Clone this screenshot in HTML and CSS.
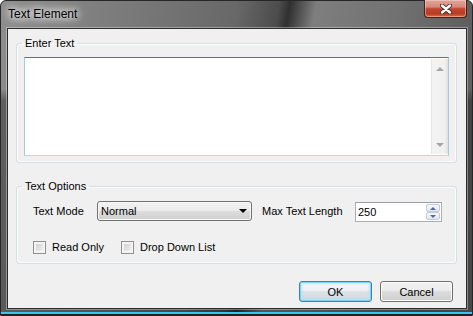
FILE: index.html
```html
<!DOCTYPE html>
<html lang="en">
<head>
  <meta charset="UTF-8" />
  <title>Text Element</title>
  <link rel="stylesheet" href="styles.css">
</head>
<body>
  <div class="window">
    <div class="titlebar">
      <span class="title">Text Element</span>
      <button class="close" aria-label="Close">
        <svg width="12" height="10" viewBox="0 0 12 10">
          <path d="M2 1.5 L10 8.5 M10 1.5 L2 8.5" stroke="#3a2a28" stroke-width="4.2" stroke-linecap="round"/>
          <path d="M2 1.5 L10 8.5 M10 1.5 L2 8.5" stroke="#fff" stroke-width="2.4" stroke-linecap="round"/>
        </svg>
      </button>
    </div>

    <div class="client">
      <fieldset class="group group-text">
        <legend>Enter Text</legend>
        <div class="textbox">
          <div class="textbox-area"></div>
          <div class="vscroll">
            <span class="arrow arrow-up"></span>
            <span class="arrow arrow-down"></span>
          </div>
        </div>
      </fieldset>

      <fieldset class="group group-options">
        <legend>Text Options</legend>
        <div class="row">
          <label class="field-label mode-label">Text Mode</label>
          <div class="combo">
            <span>Normal</span>
            <span class="combo-arrow"></span>
          </div>
          <label class="field-label len-label">Max Text Length</label>
          <div class="spin">
            <span class="spin-value">250</span>
            <div class="spin-buttons">
              <span class="spin-btn"><span class="tri tri-up"></span></span>
              <span class="spin-btn"><span class="tri tri-down"></span></span>
            </div>
          </div>
        </div>
        <div class="row checks">
          <label class="check"><span class="box"></span>Read Only</label>
          <label class="check"><span class="box"></span>Drop Down List</label>
        </div>
      </fieldset>

      <div class="buttons">
        <button class="btn btn-default">OK</button>
        <button class="btn">Cancel</button>
      </div>
    </div>
  </div>
</body>
</html>
```

FILE: styles.css
```css
* {
  box-sizing: border-box;
}

body {
  margin: 0;
  font-family: 'Liberation Sans', Arial, sans-serif;
  font-size: 11px;
  color: #000;
  background: #fff;
}

/* window frame */
.window {
  width: 473px;
  height: 316px;
  display: flex;
  flex-direction: column;
  padding: 0 5px 6px 6px;
  border: 1px solid #262626;
  border-radius: 6px 6px 0 0;
  background:
    linear-gradient(to top, #1c1c1c 0 1px, #36c6f0 1px 3px, transparent 3px),
    linear-gradient(to bottom, rgba(0, 0, 0, 0) 0 88px, rgba(0, 0, 0, 0.32) 100px),
    linear-gradient(100deg, #8e8e8e 0%, #7c7c7c 22%, #686868 45%, #4c4c4c 53%, #303030 55%, #7e7e7e 60%, #727272 75%, #5e5e5e 90%, #6a6a6a 100%);
}

.titlebar {
  height: 27px;
  display: flex;
  justify-content: space-between;
  align-items: flex-start;
}

.title {
  padding: 6px 0 0 1px;
  font-size: 12px;
  line-height: 15px;
  text-shadow: 0 0 6px #fff, 0 0 10px #fff, 0 0 14px rgba(255, 255, 255, 0.8);
}

.close {
  width: 43px;
  height: 18px;
  margin: -1px 0 0;
  padding: 0;
  display: flex;
  align-items: center;
  justify-content: center;
  border: 1px solid #4a1f18;
  border-top: 0;
  border-radius: 0 0 4px 4px;
  background: linear-gradient(to bottom, #e2a69b 0%, #d48a7c 40%, #c3452e 52%, #b93b25 80%, #d8703f 100%);
  box-shadow: inset 0 0 0 1px rgba(255, 220, 210, 0.45);
}

.client {
  flex: 1;
  display: flex;
  flex-direction: column;
  padding: 7px 9px 0 8px;
  background: #f0f0f0;
  border: 1px solid #2c2c2c;
  box-shadow: 0 0 0 1px rgba(255, 255, 255, 0.35);
}

/* group boxes */
.group {
  margin: 0;
  min-width: 0;
  border: 1px solid #d5dfe5;
  border-radius: 3px;
  box-shadow: inset 0 0 0 1px #fbfbfb;
}

.group legend {
  padding: 0 3px;
  line-height: 14px;
}

.group-text {
  padding: 7px 7px 6px 7px;
}

.group-text legend {
  margin-left: -2px;
}

.group-options {
  margin-top: 16px;
  padding: 7px 8px 9px 16px;
}

.group-options legend {
  margin-left: -11px;
}

/* multi-line text box */
.textbox {
  height: 99px;
  display: flex;
  padding: 1px 0 1px 1px;
  background: #fff;
  border: 1px solid #a4c9e3;
  border-top-color: #3d7bad;
  border-bottom-color: #b7d9ed;
}

.textbox-area {
  flex: 1;
}

.vscroll {
  width: 17px;
  display: flex;
  flex-direction: column;
  align-items: center;
  justify-content: space-between;
  padding: 8px 0 7px;
  background: linear-gradient(to right, #e6e6e6 0 1px, #f3f3f3 1px, #f0f0f0 14px, #e2e2e2 16px);
}

.arrow {
  width: 0;
  height: 0;
  border-left: 4px solid transparent;
  border-right: 4px solid transparent;
}

.arrow-up {
  border-bottom: 4px solid #a6a6a6;
}

.arrow-down {
  border-top: 4px solid #a6a6a6;
}

/* option rows */
.row {
  display: flex;
  align-items: center;
}

.field-label {
  line-height: 14px;
}

.mode-label {
  width: 64px;
}

.len-label {
  width: 93px;
  margin-left: 10px;
}

.combo {
  width: 155px;
  height: 20px;
  display: flex;
  align-items: center;
  justify-content: space-between;
  padding: 0 4px 0 3px;
  border: 1px solid #707070;
  border-radius: 3px;
  background: linear-gradient(to bottom, #f2f2f2 0%, #ebebeb 50%, #dddddd 50%, #cfcfcf 100%);
  box-shadow: inset 0 0 0 1px #f8f8f8;
}

.combo-arrow {
  width: 0;
  height: 0;
  border-left: 4px solid transparent;
  border-right: 4px solid transparent;
  border-top: 4px solid #000;
}

.spin {
  width: 87px;
  height: 20px;
  margin-top: 2px;
  display: flex;
  align-items: center;
  justify-content: space-between;
  padding: 1px 1px 1px 1px;
  background: #fff;
  border: 1px solid #abadb3;
  border-top-color: #9a9da4;
}

.spin-value {
  padding-left: 1px;
}

.spin-buttons {
  width: 14px;
  height: 16px;
  display: flex;
  flex-direction: column;
}

.spin-btn {
  flex: 1;
  display: flex;
  align-items: center;
  justify-content: center;
  border: 1px solid #c3cad6;
  border-radius: 2px;
  background: linear-gradient(to bottom, #f6f8fb, #e2e7ef);
}

.tri {
  width: 0;
  height: 0;
  border-left: 3px solid transparent;
  border-right: 3px solid transparent;
}

.tri-up {
  border-bottom: 3px solid #4f6a96;
}

.tri-down {
  border-top: 3px solid #4f6a96;
}

.checks {
  margin-top: 18px;
}

.check {
  display: flex;
  align-items: center;
  gap: 6px;
  line-height: 14px;
}

.check:first-child {
  width: 88px;
}

.box {
  width: 13px;
  height: 13px;
  border: 1px solid #8f8f8f;
  background: linear-gradient(135deg, #cbcbcb, #f7f7f7);
  box-shadow: inset 0 0 0 2px #f4f4f4;
}

/* dialog buttons */
.buttons {
  display: flex;
  justify-content: flex-end;
  gap: 8px;
  margin: 17px 4px 0 0;
}

.btn {
  width: 73px;
  height: 21px;
  padding: 0;
  font-family: inherit;
  font-size: 11px;
  color: #000;
  border: 1px solid #707070;
  border-radius: 3px;
  background: linear-gradient(to bottom, #f2f2f2 0%, #ebebeb 50%, #dddddd 50%, #cfcfcf 100%);
  box-shadow: inset 0 0 0 1px #fcfcfc;
}

.btn-default {
  border-color: #3c7fb1;
  background: linear-gradient(to bottom, #f4f7f9 0%, #ebf0f3 50%, #dde3e6 50%, #d0d8dc 100%);
  box-shadow: inset 0 0 0 1px #7fd5f7, inset 0 0 2px 2px rgba(160, 225, 250, 0.6);
}
```
